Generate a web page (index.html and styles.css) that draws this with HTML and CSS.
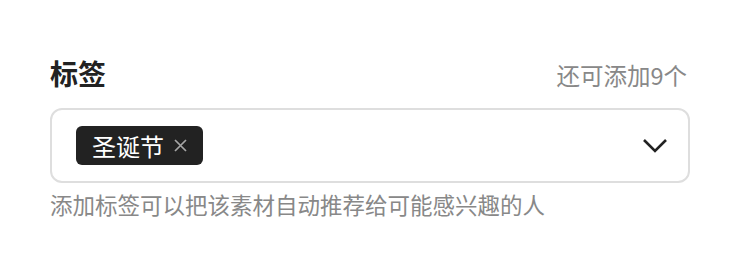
FILE: index.html
```html
<!DOCTYPE html>
<html>
  <head>
    <meta charset="utf-8" />
    <title>标签</title>
    <link rel="stylesheet" href="styles.css">
  </head>
  <body>
    <div class="field">
      <div class="field-head">
        <span class="field-title">标签</span>
        <span class="field-count">还可添加9个</span>
      </div>
      <div class="select">
        <div class="tags">
          <span class="tag">圣诞节<svg class="tag-close" width="13" height="13" viewBox="0 0 13 13"><path d="M1 1 L12 12 M12 1 L1 12" stroke="#a6a6a6" stroke-width="1.7" /></svg></span>
        </div>
        <svg class="arrow" width="26" height="16" viewBox="0 0 26 16">
          <path d="M2 2 L13 13 L24 2" fill="none" stroke="#222" stroke-width="2.6" />
        </svg>
      </div>
      <p class="field-hint">添加标签可以把该素材自动推荐给可能感兴趣的人</p>
    </div>
  </body>
</html>
```

FILE: styles.css
```css
body {
  margin: 0;
  font-family: "Noto Sans CJK SC", "Noto Sans", sans-serif;
  background-color: #fff;
  color: #222;
}
.field {
  width: 640px;
  padding: 53px 0 0 50px;
}
.field-head {
  display: flex;
  justify-content: space-between;
  align-items: baseline;
  height: 40px;
}
.field-title {
  font-size: 28px;
  font-weight: bold;
  line-height: 40px;
}
.field-count {
  font-size: 23.5px;
  color: #888;
  line-height: 40px;
  margin-right: 3px;
}
.select {
  margin-top: 15px;
  height: 71px;
  border: 2px solid #dedede;
  border-radius: 12px;
  display: flex;
  align-items: center;
  justify-content: space-between;
  padding: 0 20px 0 24px;
}
.tag {
  display: inline-flex;
  align-items: center;
  height: 39px;
  padding: 0 16px;
  background-color: #222;
  color: #fff;
  border-radius: 6px;
  font-size: 24px;
}
.tag-close {
  margin-left: 10px;
}
.field-hint {
  margin: 6px 0 0;
  font-size: 22.5px;
  line-height: 30px;
  color: #888;
}
```
